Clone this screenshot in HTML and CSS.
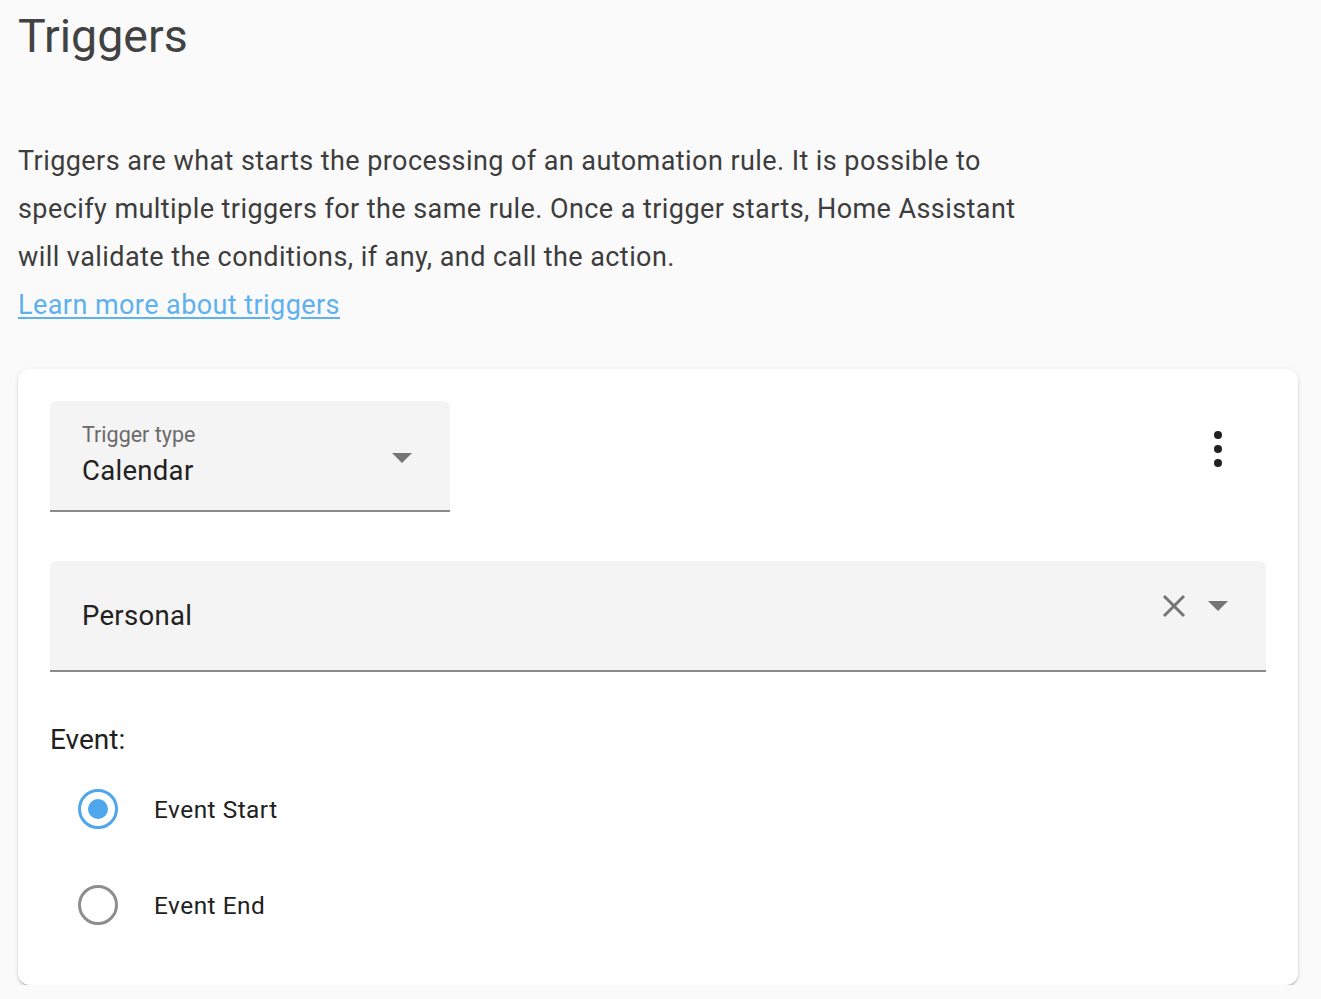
FILE: index.html
```html
<!DOCTYPE html>
<html lang="en">
<head>
<meta charset="utf-8">
<title>Triggers</title>
<link rel="stylesheet" href="styles.css">
</head>
<body>
<main class="page">
  <h1 class="title">Triggers</h1>
  <p class="intro">Triggers are what starts the processing of an automation rule. It is possible to specify multiple triggers for the same rule. Once a trigger starts, Home Assistant will validate the conditions, if any, and call the action.<br><a class="link" href="#">Learn more about triggers</a></p>

  <section class="card">
    <div class="card-head">
      <div class="field field-type">
        <div class="field-text">
          <span class="field-label">Trigger type</span>
          <span class="field-value">Calendar</span>
        </div>
        <span class="caret"></span>
      </div>
      <button class="menu-btn" aria-label="More">
        <svg width="24" height="36" viewBox="0 0 24 36"><circle cx="12" cy="4" r="4"/><circle cx="12" cy="18" r="4"/><circle cx="12" cy="32" r="4"/></svg>
      </button>
    </div>

    <div class="field field-entity">
      <span class="field-value">Personal</span>
      <div class="field-icons">
        <svg class="clear" width="24" height="24" viewBox="0 0 24 24"><path d="M2 2 L22 22 M22 2 L2 22" stroke="#757575" stroke-width="3" fill="none"/></svg>
        <span class="caret"></span>
      </div>
    </div>

    <div class="event-label">Event:</div>
    <div class="radios">
      <label class="radio-row">
        <span class="radio checked"><span class="dot"></span></span>
        <span class="radio-text">Event Start</span>
      </label>
      <label class="radio-row">
        <span class="radio"></span>
        <span class="radio-text">Event End</span>
      </label>
    </div>
  </section>
</main>
</body>
</html>
```
FILE: styles.css
```css
* { box-sizing: border-box; }
html, body { margin: 0; padding: 0; }
body {
  background: #fafafa;
  font-family: Roboto, "Noto Sans", "Liberation Sans", sans-serif;
  color: #212121;
}
.page {
  padding: 0 23px 0 18px;
}
.title {
  margin: 0;
  padding-top: 8px;
  font-size: 46.5px;
  line-height: 56px;
  font-weight: 400;
  color: #424242;
}
.intro {
  margin: 73px 0 0;
  width: 1025px;
  font-size: 27px;
  line-height: 48px;
  color: #3d3d3d;
  letter-spacing: 0.43px;
}
.link {
  color: #5eb1ef;
  text-decoration: underline;
  text-underline-offset: 3px;
}
.card {
  margin-top: 40px;
  background: #fff;
  border-radius: 12px;
  padding: 32px 32px 32px;
  box-shadow: 0 2px 2px rgba(0,0,0,.14), 0 1px 5px rgba(0,0,0,.10), 0 3px 1px -2px rgba(0,0,0,.2);
}
.card-head {
  display: flex;
  justify-content: space-between;
  align-items: flex-start;
}
.field {
  background: #f4f4f4;
  border-radius: 6px 6px 0 0;
  border-bottom: 2px solid #8c8c8c;
  height: 111px;
  display: flex;
  align-items: center;
  padding: 0 38px 0 32px;
}
.field-type {
  width: 400px;
  justify-content: space-between;
}
.field-text {
  display: flex;
  flex-direction: column;
  gap: 4px;
}
.field-label {
  font-size: 21.5px;
  line-height: 26px;
  color: #6b6b6b;
}
.field-value {
  font-size: 27.5px;
  line-height: 38px;
  color: #212121;
  letter-spacing: 0.3px;
}
.caret {
  width: 0;
  height: 0;
  border-left: 10px solid transparent;
  border-right: 10px solid transparent;
  border-top: 10px solid #757575;
}
.field-type .caret { margin-top: 4px; }
.menu-btn {
  background: none;
  border: 0;
  padding: 0;
  margin: 30px 36px 0 0;
  fill: #212121;
  display: flex;
}
.field-entity {
  margin-top: 49px;
  justify-content: space-between;
  padding-right: 38px;
}
.field-icons {
  display: flex;
  align-items: center;
  gap: 22px;
  margin-top: -19px;
}
.event-label {
  margin-top: 50px;
  font-size: 28px;
  line-height: 36px;
  color: #212121;
}
.radios {
  margin-top: 3px;
  display: flex;
  flex-direction: column;
}
.radio-row {
  height: 96px;
  display: flex;
  align-items: center;
}
.radio {
  width: 40px;
  height: 40px;
  margin: 0 36px 0 28px;
  border-radius: 50%;
  border: 3px solid #8e8e8e;
  display: flex;
  align-items: center;
  justify-content: center;
}
.radio.checked { border-color: #4ea6ed; }
.dot {
  width: 20px;
  height: 20px;
  border-radius: 50%;
  background: #4ea6ed;
}
.radio-text {
  font-size: 24.4px;
  letter-spacing: 0.5px;
  color: #212121;
}
```
